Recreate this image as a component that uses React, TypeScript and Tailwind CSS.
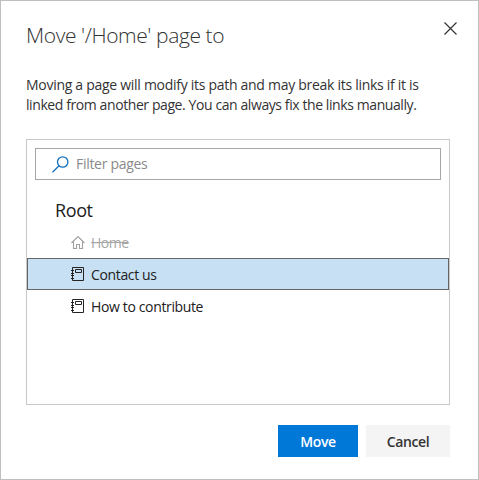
import React from 'react';

function HomeIcon() {
  return (
    <svg className="block h-[14px] w-[14px]" viewBox="0 0 14 14" fill="none" stroke="#a0a0a0" strokeWidth="1.100">
      <path d="M.5 8 7 1.500 13.500 8M2.500 6.500v7h3v-4h3v4h3v-7" />
    </svg>
  );
}

function PageIcon() {
  return (
    <svg className="block h-[14px] w-[14px]" viewBox="0 0 14 14" fill="none" stroke="#252423" strokeWidth="1">
      <path d="M1.500.5h11v13h-11zM4.500 2.500h6v3h-6zM0 3.500h3M0 6.500h3M0 8.500h3M0 11.500h3" />
    </svg>
  );
}

type RowProps = { label: string; kind?: 'page' | 'home'; selected?: boolean };

function Row({ label, kind = 'page', selected = false }: RowProps) {
  const home = kind === 'home';
  return (
    <li
      className={`flex h-8 items-center border pl-[43px] text-[14px] leading-5 ${
        selected ? 'border-[#666666] bg-[#c7e0f4]' : 'border-transparent'
      } ${home ? 'text-[#a6a6a6]' : 'text-[#212121]'}`}
    >
      {home ? <HomeIcon /> : <PageIcon />}
      <span className={`mt-[2px] ml-[6px] whitespace-nowrap ${home ? 'tracking-[-0.5px] line-through' : 'tracking-[-0.36px]'}`}>{label}</span>
    </li>
  );
}

export default function App() {
  return (
    <div className="flex h-[480px] w-[479px] flex-col border border-[#bfbfbf] bg-white font-['Open_Sans','Noto_Sans',sans-serif] text-[#333333]">
      <header className="flex h-[74px] items-start justify-between pr-[21px] pl-[25px]">
        <h1 className="mt-[19px] text-[21px] leading-[30px] font-light tracking-[-0.4px] whitespace-nowrap">Move '/Home' page to</h1>
        <button aria-label="Close" className="mt-[21px]">
          <svg className="block h-[13px] w-[13px]" viewBox="0 0 13 13" fill="none" stroke="#333333" strokeWidth="1.200">
            <path d="m.5.5 12 12m0-12-12 12" />
          </svg>
        </button>
      </header>
      <p className="ml-[25px] text-[14px] leading-5 whitespace-nowrap">
        <span className="block tracking-[-0.285px]">Moving a page will modify its path and may break its links if it is</span>
        <span className="block tracking-[-0.41px]">linked from another page. You can always fix the links manually.</span>
      </p>
      <section className="mt-[24px] ml-[25px] h-[266px] w-[424px] border border-[#c8c8c8]">
        <div className="mt-2 ml-2 flex h-8 w-[406px] items-center border border-[#a6a6a6] pl-4">
          <svg className="block h-[17px] w-[17px]" viewBox="0 0 17 17" fill="none" stroke="#106ebe" strokeWidth="1.300">
            <circle cx="10.700" cy="6" r="5.200" />
            <path d="m7 9.700-6.500 6.500" />
          </svg>
          <span className="ml-[7px] text-[14px] leading-5 tracking-[-0.3px] text-[#8a8a8a]">Filter pages</span>
        </div>
        <h2 className="mt-[17px] ml-[28px] h-[29px] text-[18px] leading-[26px] tracking-[-0.4px] text-[#212121]">Root</h2>
        <ul>
          <Row label="Home" kind="home" />
          <Row label="Contact us" selected />
          <Row label="How to contribute" />
        </ul>
      </section>
      <footer className="mt-[20px] ml-[277px] flex gap-2 text-[14px] font-semibold tracking-[-0.35px]">
        <button className="h-8 w-20 bg-[#0078d7] text-white">Move</button>
        <button className="h-8 w-[84px] bg-[#f4f4f4]">Cancel</button>
      </footer>
    </div>
  );
}
